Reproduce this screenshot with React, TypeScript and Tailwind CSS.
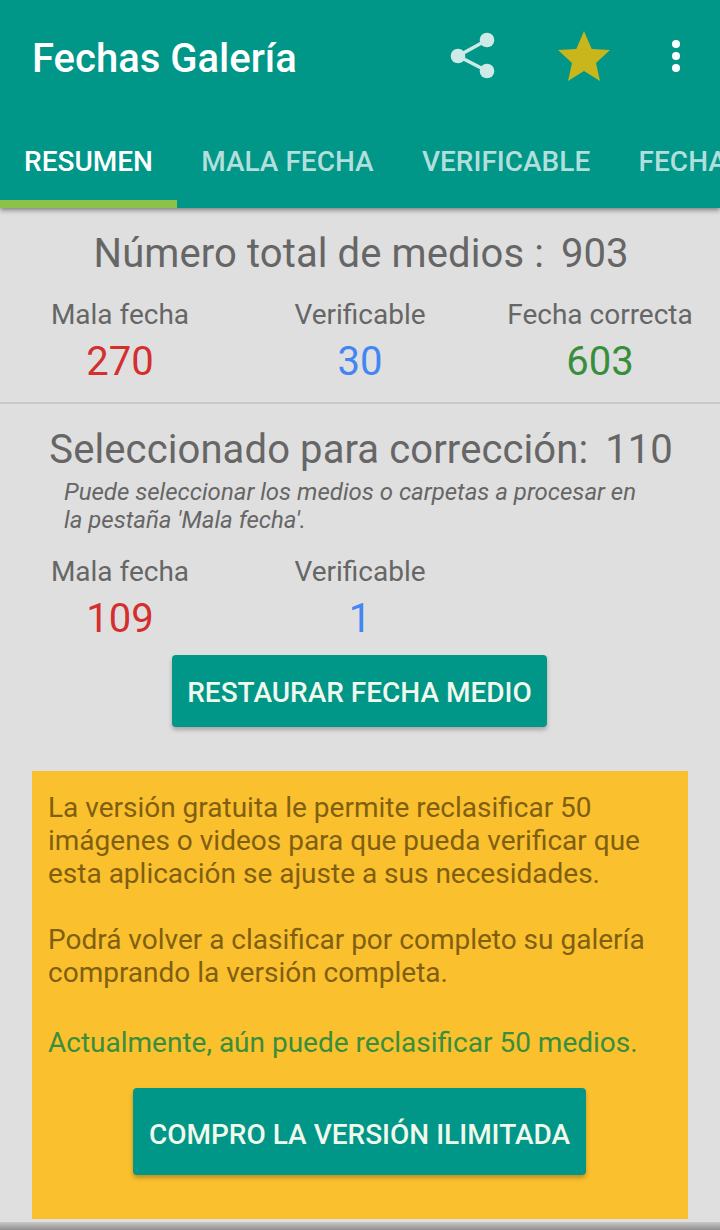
const tabs = ['MALA FECHA', 'VERIFICABLE', 'FECHA CORRECTA'];

function Stat({ label, value, color }: { label: string; value: string; color: string }) {
  return (
    <div className="flex flex-col items-center">
      <div className="text-[28px] leading-[40px] text-[#666666]">{label}</div>
      <div className={`mt-[1px] text-[40px] leading-[52px] ${color}`}>{value}</div>
    </div>
  );
}

function Total({ label, value }: { label: string; value: string }) {
  return (
    <div className="flex justify-center gap-[17px] pl-[2px] text-[40px] leading-[44px] text-[#666666]">
      <span className="tracking-[0.1px]">{label}</span>
      <span>{value}</span>
    </div>
  );
}

export default function App() {
  return (
    <div className="relative h-[1230px] w-[720px] overflow-hidden bg-[#dfdfdf] font-['Roboto',sans-serif]">
      <header className="relative z-10 h-[208px] bg-[#009688] shadow-[0_2px_5px_rgba(0,0,0,0.45)]">
        <div className="flex h-[116px] items-center">
          <h1 className="ml-[32px] w-[416px] pt-[2px] text-[40px] font-medium text-white">Fechas Galería</h1>
          <svg width="48" height="52" viewBox="0 0 48 52" className="text-[#cdeae7]" fill="currentColor">
            <circle cx="39" cy="8" r="7.3" />
            <circle cx="39" cy="39" r="7.3" />
            <circle cx="10" cy="24" r="7.3" />
            <path d="M10 24 39 8M10 24 39 39" stroke="currentColor" strokeWidth="3.5" fill="none" />
          </svg>
          <svg width="54" height="54" viewBox="0 0 54 54" className="ml-[61px]" fill="#c9b51c">
            <path d="M27 0 34.7 18 53 19 39 32 43 50 27 40 11 50 15 32 1 19 19.3 18Z" />
          </svg>
          <div className="mb-[4px] ml-[61px] flex flex-col gap-[4px]">
            <span className="h-2 w-2 rounded-full bg-white" />
            <span className="h-2 w-2 rounded-full bg-white" />
            <span className="h-2 w-2 rounded-full bg-white" />
          </div>
        </div>
        <nav className="flex h-[92px] whitespace-nowrap text-[28px] font-medium">
          <div className="flex h-full w-[177px] shrink-0 items-start justify-center border-b-[8px] border-[#8bc34a] pt-[25px] text-white">RESUMEN</div>
          {tabs.map((tab) => (
            <div key={tab} className="shrink-0 px-[24.2px] pt-[25px] text-[#b2dfdb]">{tab}</div>
          ))}
        </nav>
      </header>

      <section className="h-[196px] border-b-2 border-[#c9c9c9] pt-[24px]">
        <Total label="Número total de medios :" value="903" />
        <div className="mt-[19px] grid grid-cols-3">
          <Stat label="Mala fecha" value="270" color="text-[#d32f2f]" />
          <Stat label="Verificable" value="30" color="text-[#4285f4]" />
          <Stat label="Fecha correcta" value="603" color="text-[#388e3c]" />
        </div>
      </section>

      <section className="pt-[24px]">
        <Total label="Seleccionado para corrección:" value="110" />
        <p className="ml-[64px] mt-[6px] w-[590px] text-[24px] italic leading-[28px] text-[#666666]">
          Puede seleccionar los medios o carpetas a procesar en la pestaña 'Mala fecha'.
        </p>
        <div className="mt-[18px] grid grid-cols-3">
          <Stat label="Mala fecha" value="109" color="text-[#d32f2f]" />
          <Stat label="Verificable" value="1" color="text-[#4285f4]" />
        </div>
        <div className="mt-[10px] flex justify-center pr-[1px]">
          <button className="h-[72px] w-[375px] rounded-[4px] bg-[#009688] pt-[4px] text-[28px] font-medium text-[#f0f9ec] shadow-[0_3px_4px_rgba(0,0,0,0.25)]">
            RESTAURAR FECHA MEDIO
          </button>
        </div>
      </section>

      <section className="mx-[32px] mt-[44px] h-[448px] bg-[#fbc02d] px-[16px] pt-[20px] text-[28px] leading-[33px] text-[#7f5f12]">
        <p>La versión gratuita le permite reclasificar 50 imágenes o videos para que pueda verificar que esta aplicación se ajuste a sus necesidades.</p>
        <p className="mt-[33px]">Podrá volver a clasificar por completo su galería comprando la versión completa.</p>
        <p className="mt-[37px] whitespace-nowrap text-[#388e3c]">Actualmente, aún puede reclasificar 50 medios.</p>
        <div className="mt-[29px] flex justify-center pr-[1px]">
          <button className="h-[87px] w-[453px] rounded-[4px] bg-[#009688] pt-[5px] text-[28px] font-medium text-[#f0f9ec] shadow-[0_3px_4px_rgba(0,0,0,0.25)]">
            COMPRO LA VERSIÓN ILIMITADA
          </button>
        </div>
      </section>
      <div className="absolute bottom-0 left-0 h-[8px] w-full bg-gradient-to-b from-[#c8c8c8] to-[#8f8f8f]" />
    </div>
  );
}
